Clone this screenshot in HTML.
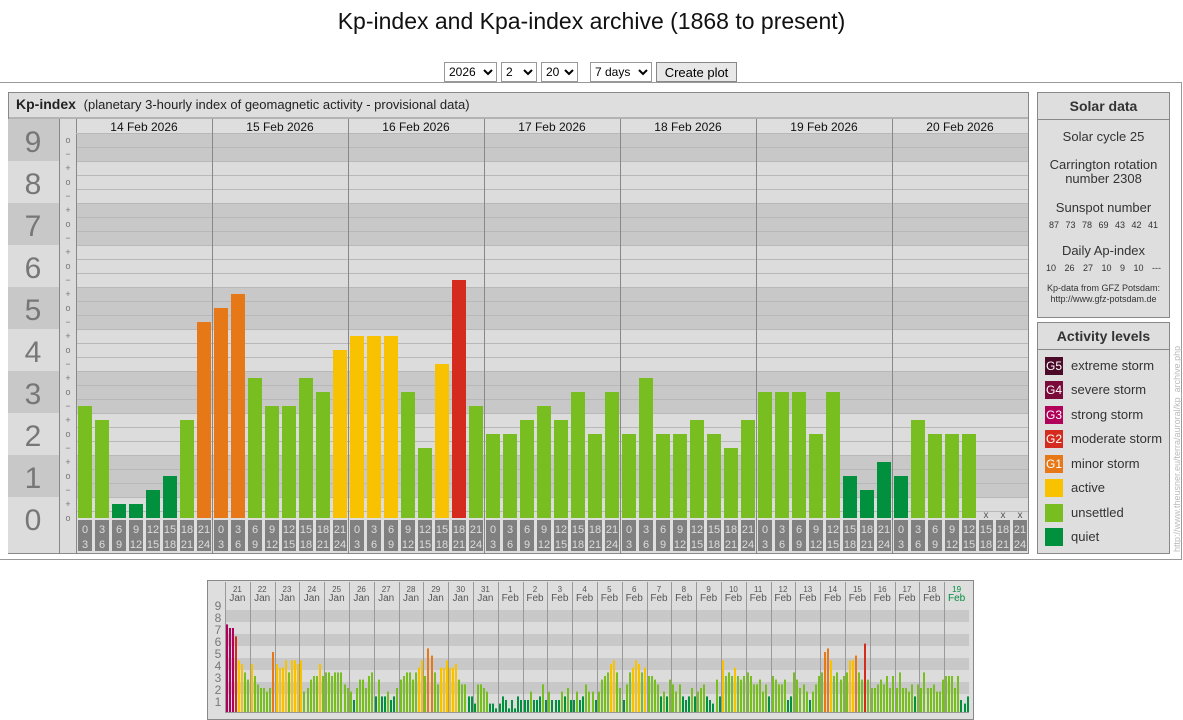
<!DOCTYPE html><html><head><meta charset="utf-8"><style>
body{margin:0;width:1183px;height:719px;overflow:hidden;background:#fff;font-family:"Liberation Sans",sans-serif;position:relative}
.a{position:absolute}
h1{position:absolute;top:8px;left:0;width:1183px;text-align:center;font-weight:normal;font-size:23px;margin:0;color:#111}
select,button{position:absolute;font:12px "Liberation Sans",sans-serif;height:20px;top:62px;background:#fff;border:1px solid #999;padding:0;box-sizing:border-box}
button{background:#e8e8e8;border:1px solid #888;font-size:13px}
.rp{background:#dedede;border:1px solid #888;box-sizing:border-box;text-align:center;color:#333}
.lg{position:absolute;left:7px;width:18px;height:18px;color:#fff;font-size:12px;line-height:18px;text-align:center}
.lt{position:absolute;left:33px;font-size:13px;color:#333}
</style></head><body>
<h1>Kp-index and Kpa-index archive (1868 to present)</h1>
<select style="left:444px;width:53px"><option>2026</option></select>
<select style="left:501px;width:36px"><option>2</option></select>
<select style="left:541px;width:37px"><option>20</option></select>
<select style="left:590px;width:62px"><option>7 days</option></select>
<button style="left:656px;width:81px">Create plot</button>
<div class="a" style="left:0;top:82px;width:1182px;height:478px;border:1px solid #999;border-left:none;box-sizing:border-box"></div>
<div class="a" style="left:8px;top:92px;width:1021px;height:462px;border:1px solid #888;box-sizing:border-box;background:#dedede"></div>
<div class="a" style="left:16px;top:96px;font-size:14px;color:#222"><b>Kp-index</b>&nbsp; <span style="font-size:13px">(planetary 3-hourly index of geomagnetic activity - provisional data)</span></div>
<svg class="a" style="left:0;top:0" width="1183" height="719" id="s"></svg>
<div class="a rp" style="left:1037px;top:92px;width:133px;height:226px">
<div style="height:26px;border-bottom:1px solid #888;font-weight:bold;font-size:14px;line-height:26px">Solar data</div>
<div style="font-size:13px;margin-top:9px">Solar cycle 25</div>
<div style="font-size:13px;margin-top:14px;line-height:14px">Carrington rotation<br>number 2308</div>
<div style="font-size:13px;margin-top:14px">Sunspot number</div>
<div style="font-size:9px;margin-top:5px;word-spacing:4px">87 73 78 69 43 42 41</div>
<div style="font-size:13px;margin-top:13px">Daily Ap-index</div>
<div style="font-size:9px;margin-top:5px;word-spacing:6px">10 26 27 10 9 10 ---</div>
<div style="font-size:9px;margin-top:10px;line-height:11px">Kp-data from GFZ Potsdam:<br>http://www.gfz-potsdam.de</div>
</div>
<div class="a rp" style="left:1037px;top:322px;width:133px;height:232px;text-align:left">
<div style="height:26px;border-bottom:1px solid #888;font-weight:bold;font-size:14px;line-height:26px;text-align:center">Activity levels</div>
<div class="lg" style="top:34px;background:#4a0a28">G5</div><div class="lt" style="top:35px">extreme storm</div>
<div class="lg" style="top:58px;background:#7a0a3a">G4</div><div class="lt" style="top:59px">severe storm</div>
<div class="lg" style="top:83px;background:#b0005a">G3</div><div class="lt" style="top:84px">strong storm</div>
<div class="lg" style="top:107px;background:#d52b1e">G2</div><div class="lt" style="top:108px">moderate storm</div>
<div class="lg" style="top:132px;background:#e67817">G1</div><div class="lt" style="top:133px">minor storm</div>
<div class="lg" style="top:156px;background:#f9c200"></div><div class="lt" style="top:157px">active</div>
<div class="lg" style="top:181px;background:#78be20"></div><div class="lt" style="top:182px">unsettled</div>
<div class="lg" style="top:205px;background:#00903e"></div><div class="lt" style="top:206px">quiet</div>
</div>
<div class="a" style="left:1172px;top:552px;transform:rotate(-90deg);transform-origin:0 0;font-size:9px;color:#bbb;white-space:nowrap">http://www.theusner.eu/terra/auroral/kp_archive.php</div>
<div class="a" style="left:207px;top:580px;width:767px;height:140px;border:1px solid #888;box-sizing:border-box"></div>
<script>
var s=document.getElementById('s'),h='';
function r(x,y,w,hh,c){h+='<rect x="'+x+'" y="'+y+'" width="'+w+'" height="'+hh+'" fill="'+c+'"/>';}
function l(x1,y1,x2,y2,c){h+='<line x1="'+x1+'" y1="'+y1+'" x2="'+x2+'" y2="'+y2+'" stroke="'+c+'" stroke-width="1"/>';}
function t(x,y,str,sz,c,a){h+='<text x="'+x+'" y="'+y+'" font-size="'+sz+'" fill="'+c+'" text-anchor="'+(a||'middle')+'" font-family="Liberation Sans">'+str+'</text>';}
function col(v){return v<=4?'#00903e':v<=10?'#78be20':v<=13?'#f9c200':v<=16?'#e67817':v<=19?'#d52b1e':'#b0005a';}
l(8,118,1028,118,'#888');
for(var k=0;k<=9;k++){var c=518-42*k,y1=Math.max(c-21,119),y2=Math.min(c+21,k==0?553:999);
 r(8,y1,51,y2-y1,k%2?'#c8c8c8':'#dcdcdc');
 var pt=Math.max(c-21,133),pb=Math.min(c+21,518);r(76,pt,952,pb-pt,k%2?'#c8c8c8':'#dcdcdc');
 t(33,c+12,k,30,'#777');}
r(8,497,51,56,'#dcdcdc');t(33,530,0,30,'#777');
r(59,119,17,434,'#dcdcdc');
for(var n=0;n<=27;n++){var y=518-14*n;t(68,y+3,n%3==0?'o':(n%3==1?'+':'\u2212'),9,'#777');}
for(var n=0;n<27;n++){var y=518-14*n-7;if(y>133)l(76,y+0.5,1028,y+0.5,'#b8b8b8');}
l(59.5,119,59.5,553,'#888');l(76.5,119,76.5,553,'#888');l(76,133.5,1028,133.5,'#b8b8b8');
var days=['14','15','16','17','18','19','20'];
var v=[8,7,1,1,2,3,7,14, 15,16,10,8,8,10,9,12, 13,13,13,9,5,11,17,8, 6,6,7,8,7,9,6,9, 6,10,6,6,7,6,5,7, 9,9,9,6,9,3,2,4, 3,7,6,6,6,-1,-1,-1];
var hr=['0','3','6','9','12','15','18','21','24'];
for(var d=0;d<7;d++){var x0=76+136*d;t(x0+68,131,days[d]+' Feb 2026',12,'#111');if(d>0)l(x0+0.5,119,x0+0.5,553,'#888');
 for(var b=0;b<8;b++){var x=x0+17*b+2,vv=v[d*8+b];
  if(vv>0)r(x,518-14*vv,14,14*vv,col(vv));else t(x+7,518,'x',10,'#555');
  r(x,520,14,31,'#808080');t(x+7,533,hr[b],11,'#ddd');t(x+7,548,hr[b+1],11,'#ddd');}}
var bx=225,bw=744,bb=712;
r(208,581,765,138,'#dedede');
for(var k=1;k<=10;k++){var y=bb-12*k;r(bx,y-6,bw,12,k%2?'#dcdcdc':'#c8c8c8');}
r(bx,581,bw,18,'#dedede');
for(var k=1;k<=9;k++){t(218,bb-12*k+5+1,k,12,'#777');}
var dd=bw/30,mon=['21','22','23','24','25','26','27','28','29','30','31','1','2','3','4','5','6','7','8','9','10','11','12','13','14','15','16','17','18','19','20'];
var prof=[[7.3,7,7,6.3,4.3,4,3.3,2.7],[4,3,2.3,2,2,1.7,2,5],[4,3.7,3.7,4.3,3.3,4.3,4.3,4],[4.3,1.7,2,2.7,3,3,4,3],[3.3,3.3,3,3.3,3.3,3.3,2.3,2],[1.7,1,2,2.7,2.7,2,3,3.3],[1.3,2.7,1.3,1.3,1.7,1,1.3,2],[2.7,3,3.3,3.3,2.7,3.3,3.7,4.3],[3,5.3,4.7,3.3,2.3,3.7,3.7,4.3],[3.7,3.7,4,2.7,2.3,2.3,1.3,1.3],[0.7,2.3,2.3,2,1.7,0.7,0.7,0.3],[0.7,1.3,1,0.3,1,0.3,1.3,1],[1,1,1.7,1,1,1.3,2.3,1],[1.7,1,1,1,1.7,1.3,2,1],[1,1.7,1,1.3,2.3,1.7,1.7,1],[1.7,2.7,3,3.3,4,4.3,3.3,2],[1,2.3,3.3,3.7,4.3,4,3.3,3.7],[3,3,2.7,2.3,1.3,1.7,1.3,2.7],[2.3,1.7,2.3,1.3,1,1.3,2,1.3],[1.7,2,2.3,1.3,1,0.7,2.7,1.3],[4.3,3,3.3,3,3.7,3,2.7,3],[3.3,3,2.3,2.3,2.7,1.7,2.3,1.3],[3,2.7,2.3,2.3,2.7,1,1.3,3.3],[2.7,2,2.3,1.7,1,1.7,2.3,3],[3.3,5,5.3,4.3,3,3.3,2.7,3],[3.3,4.3,4.3,4.7,3.3,2.7,5.7,2.7],[2,2,2.3,2.7,2.3,3,2,3],[2,3.3,2,2,1.7,2.3,1.3,2.3],[2,3.3,2,2,2.3,1.7,1.7,2.7],[3,3,3,2,3,1,0.7,1.3],[1,2.3,2,2,2,0,0,0]];
for(var d=0;d<30;d++){var x0=bx+dd*d;if(d>0)l(Math.round(x0)+0.5,582,Math.round(x0)+0.5,712,'#999');
 var lbl=d<11?'Jan':'Feb';
 t(x0+dd/2,592,mon[d],8,d==29?'#00903e':'#555');t(x0+dd/2,601,lbl,10,d==29?'#00903e':'#555');
 for(var b=0;b<8;b++){var kv=prof[d][b];if(kv<=0)continue;var th=Math.round(kv*3);r(Math.round(x0+1+b*3.05),bb-12*kv,2,12*kv,col(th));}}
l(bx+0.5,582,bx+0.5,712,'#999');l(bx,712.5,bx+bw,712.5,'#999');
s.innerHTML=h;
</script>
</body></html>
